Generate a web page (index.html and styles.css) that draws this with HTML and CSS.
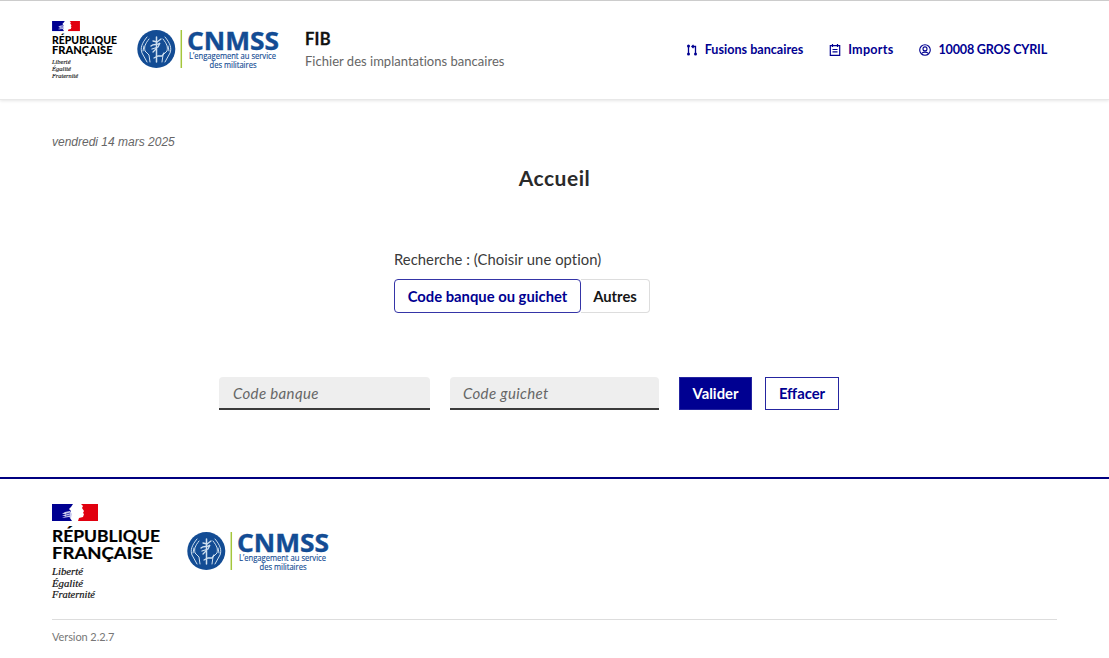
FILE: index.html
```html
<!DOCTYPE html>
<html lang="fr">
<head>
<meta charset="utf-8">
<title>FIB - Accueil</title>
<link rel="stylesheet" href="styles.css">
</head>
<body>
<svg width="0" height="0" class="defs" aria-hidden="true">
  <symbol id="flag" viewBox="0 0 46 17">
    <path fill="#000091" d="M0 0h21l-2 3-2 2 2 2-1 2 1 2-1 3 2 3H0z"/>
    <path fill="#e1000f" d="M29 0h17v17H26l1-3 4-1 1-3-1-1 1-2-2-3 1-2z"/>
    <path fill="#c9c9ee" d="M18 7l-5 1-3 2 4 0-4 2 4 0-4 2 7-1 2 1 1-4z"/>
    <path fill="none" stroke="#000091" stroke-width=".7" d="M14 10l4-1M14 12l4-1"/>
  </symbol>
  <symbol id="emblem" viewBox="0 0 46 40">
    <circle cx="19.300" cy="20" r="19" fill="#134c94"/>
    <g fill="none" stroke="#cfe0f0" stroke-linecap="round">
      <path stroke-width="1" d="M10 8C5 14 3 19 5 24l5 9M12 10c-4 5-5 8-4 12l4 4 1 7M7 17l-1 5M28 8c5 6 7 11 5 16l-5 9M26 10c4 5 5 8 4 12l-4 4-1 7M31 17l1 5"/>
      <path stroke-width="1.500" d="M19.500 8v25"/>
      <path stroke-width="1.300" d="M16 12l4 1 4-3M14 17c3-3 6 0 9-3l-2 4-6 2M16 23l3-3M17 29l4-2 4 0 2-3"/>
    </g>
    <path d="M44.300 1v38" stroke="#a4c63b" stroke-width="1.500"/>
  </symbol>
</svg>
<header class="header">
  <svg class="rf-small" viewBox="0 0 66 60">
    <use href="#flag" width="28" height="10.300"/>
    <text class="rf-name" x="0" y="22.800" textLength="65" lengthAdjust="spacingAndGlyphs">RÉPUBLIQUE</text>
    <text class="rf-name" x="0" y="33.200" textLength="60.500" lengthAdjust="spacingAndGlyphs">FRANÇAISE</text>
    <text class="rf-motto" x="0" y="43" textLength="18.500" lengthAdjust="spacingAndGlyphs">Liberté</text>
    <text class="rf-motto" x="0" y="50" textLength="19" lengthAdjust="spacingAndGlyphs">Égalité</text>
    <text class="rf-motto" x="0" y="57" textLength="26" lengthAdjust="spacingAndGlyphs">Fraternité</text>
  </svg>
  <svg class="cnmss cnmss-header" viewBox="0 0 142 40">
    <use href="#emblem" width="46" height="40"/>
    <text class="cn-name" x="50" y="21" textLength="92" lengthAdjust="spacingAndGlyphs">CNMSS</text>
    <text class="cn-tag" x="52" y="30" textLength="87" lengthAdjust="spacingAndGlyphs">L’engagement au service</text>
    <text class="cn-tag" x="72.500" y="39" textLength="47" lengthAdjust="spacingAndGlyphs">des militaires</text>
  </svg>
  <div class="service">
    <div class="service-title">FIB</div>
    <div class="service-tagline">Fichier des implantations bancaires</div>
  </div>
  <nav class="nav">
    <a class="nav-link nav-merge"><svg viewBox="0 0 12 12"><g fill="none" stroke="currentColor" stroke-width="1.300"><path d="M2.500 3v6M6.500 2.500h3v6.500M7.500.9L5.900 2.500l1.600 1.600"/></g><g fill="currentColor"><circle cx="2.500" cy="2" r="1.500"/><circle cx="2.500" cy="10" r="1.500"/><circle cx="9.500" cy="10" r="1.500"/></g></svg><span>Fusions bancaires</span></a>
    <a class="nav-link nav-import"><svg viewBox="0 0 12 12"><g fill="none" stroke="currentColor" stroke-width="1.200"><path d="M1.300 1.700h9.400v9.700H1.300zM3.500 0v3M8.500 0v3M3.500 5.500h5M3.500 7.800h5"/></g></svg><span>Imports</span></a>
    <a class="nav-link nav-user"><svg viewBox="0 0 12 12"><g fill="none" stroke="currentColor" stroke-width="1.100"><circle cx="6" cy="6" r="5.300"/><circle cx="6" cy="4.900" r="2"/><path d="M2.500 9.500C4 7.700 8 7.700 9.500 9.500"/></g></svg><span>10008 GROS CYRIL</span></a>
  </nav>
</header>
<main class="main">
  <p class="date">vendredi 14 mars 2025</p>
  <h1 class="title"><span>Accueil</span></h1>
  <section class="search">
    <div class="legend"><span>Recherche : (Choisir une option)</span></div>
    <div class="segments">
      <button class="segment segment-on"><span>Code banque ou guichet</span></button>
      <button class="segment segment-off"><span>Autres</span></button>
    </div>
  </section>
  <form class="form">
    <div class="field"><span>Code banque</span></div>
    <div class="field field-last"><span>Code guichet</span></div>
    <button type="button" class="btn btn-primary"><span>Valider</span></button>
    <button type="button" class="btn btn-outline"><span>Effacer</span></button>
  </form>
</main>
<footer class="footer">
  <div class="footer-brand">
    <svg class="rf-large" viewBox="0 0 110 100">
      <use href="#flag" width="46" height="17"/>
      <text class="rfl-name" x="0" y="37.800" textLength="108" lengthAdjust="spacingAndGlyphs">RÉPUBLIQUE</text>
      <text class="rfl-name" x="0" y="55" textLength="101" lengthAdjust="spacingAndGlyphs">FRANÇAISE</text>
      <text class="rfl-motto" x="0" y="71" textLength="31" lengthAdjust="spacingAndGlyphs">Liberté</text>
      <text class="rfl-motto" x="0" y="82.500" textLength="31" lengthAdjust="spacingAndGlyphs">Égalité</text>
      <text class="rfl-motto" x="0" y="94" textLength="43" lengthAdjust="spacingAndGlyphs">Fraternité</text>
    </svg>
    <svg class="cnmss cnmss-footer" viewBox="0 0 142 40">
      <use href="#emblem" width="46" height="40"/>
      <text class="cn-name" x="50" y="21" textLength="92" lengthAdjust="spacingAndGlyphs">CNMSS</text>
      <text class="cn-tag" x="52" y="30" textLength="87" lengthAdjust="spacingAndGlyphs">L’engagement au service</text>
      <text class="cn-tag" x="72.500" y="39" textLength="47" lengthAdjust="spacingAndGlyphs">des militaires</text>
    </svg>
  </div>
  <div class="footer-bottom"><span>Version 2.2.7</span></div>
</footer>
</body>
</html>
```
FILE: styles.css
```css
* { box-sizing: border-box; }
body { margin: 0; height: 658px; overflow: hidden; background: #fff; color: #3a3a3a; font-family: Lato, "Open Sans", sans-serif; font-variant-ligatures: none; }
.defs { position: absolute; }
svg { display: block; flex: none; overflow: visible; }
span { white-space: nowrap; }

.header { height: 100px; padding: 0 62px 0 52px; border-top: 1px solid #ccc; border-bottom: 1px solid #e8e8e8; box-shadow: 0 1px 3px rgba(0, 0, 0, .1); display: flex; align-items: flex-start; }
.rf-small { width: 66px; height: 60px; margin-top: 20px; }
.rf-name { font: 900 10.400px Lato, sans-serif; fill: #000; }
.rf-motto { font: italic 6.500px "Liberation Serif", serif; fill: #222; stroke: #222; stroke-width: .15px; }
.cnmss { width: 142px; height: 40px; }
.cnmss-header { margin: 28px 0 0 19px; }
.cnmss-footer { margin: 27px 0 0 25px; }
.cn-name { font: 700 25px "Open Sans", sans-serif; fill: #134c94; stroke: #134c94; stroke-width: .4px; }
.cn-tag { font: 8.300px "Open Sans", sans-serif; fill: #134c94; stroke: #134c94; stroke-width: .15px; }

.service { margin: 27px 0 0 26px; }
.service-title { color: #111; font-size: 16.500px; font-weight: 700; line-height: 22px; letter-spacing: .2px; -webkit-text-stroke: .3px #111; }
.service-tagline { color: #666; font-size: 13px; line-height: 20px; margin-top: 1px; white-space: nowrap; letter-spacing: .02px; }

.nav { margin: 38px 0 0 auto; display: flex; gap: 26px; color: #000091; font-size: 12.600px; font-weight: 700; line-height: 20px; }
.nav-link { display: flex; align-items: center; gap: 7px; }
.nav-link svg { width: 12px; height: 12px; }
.nav-link span { padding-top: 1px; }
.nav-import { letter-spacing: .25px; }
.nav-user { letter-spacing: -.2px; }

.main { height: 377px; }
.date { margin: 0; padding: 34px 0 0 52px; color: #666; font: italic 12px/17px "Liberation Sans", Arial, sans-serif; }
.title { margin: 13px 0 0; text-align: center; font-size: 21px; line-height: 28px; font-weight: 700; color: #2a2a2a; letter-spacing: .5px; }
.search { margin: 57px 0 0 394px; }
.legend { font-size: 14.800px; line-height: 20px; letter-spacing: .05px; }
.segments { display: flex; margin-top: 10px; }
.segment { height: 34px; padding: 0; background: #fff; font: 700 14.800px/20px Lato, sans-serif; border-radius: 4px; }
.segment-on { width: 187px; border: 1px solid #3535a7; color: #000091; }
.segment-off { width: 69px; border: 1px solid #ddd; border-left: 0; border-radius: 0 4px 4px 0; color: #161616; }

.form { display: flex; margin: 64px 0 0 219px; }
.field { width: 211px; height: 33px; margin-right: 20px; padding: 0 14px; background: #eee; border-radius: 4px 4px 0 0; border-bottom: 2px solid #3a3a3a; color: #666; font-size: 15px; line-height: 33px; font-style: italic; letter-spacing: .35px; }
.field-last { width: 209px; padding-left: 13px; }
.btn { height: 33px; padding: 0 0 2px; font: 700 14.800px/20px Lato, sans-serif; border: 1px solid #2525a0; border-radius: 0; }
.btn-primary { width: 73px; background: #000091; color: #fff; margin-right: 13px; }
.btn-outline { width: 74px; background: #fff; color: #000091; }

.footer { height: 181px; padding: 25px 52px 0; border-top: 2px solid #000080; }
.footer-brand { display: flex; height: 116px; border-bottom: 1px solid #ddd; }
.rf-large { width: 110px; height: 100px; }
.rfl-name { font: 700 17px Lato, sans-serif; fill: #000; stroke: #000; stroke-width: .2px; }
.rfl-motto { font: italic 10px "Liberation Serif", serif; fill: #111; stroke: #111; stroke-width: .2px; }
.footer-bottom { padding-top: 9px; color: #777; font-size: 11px; line-height: 16px; letter-spacing: -.08px; }
```
